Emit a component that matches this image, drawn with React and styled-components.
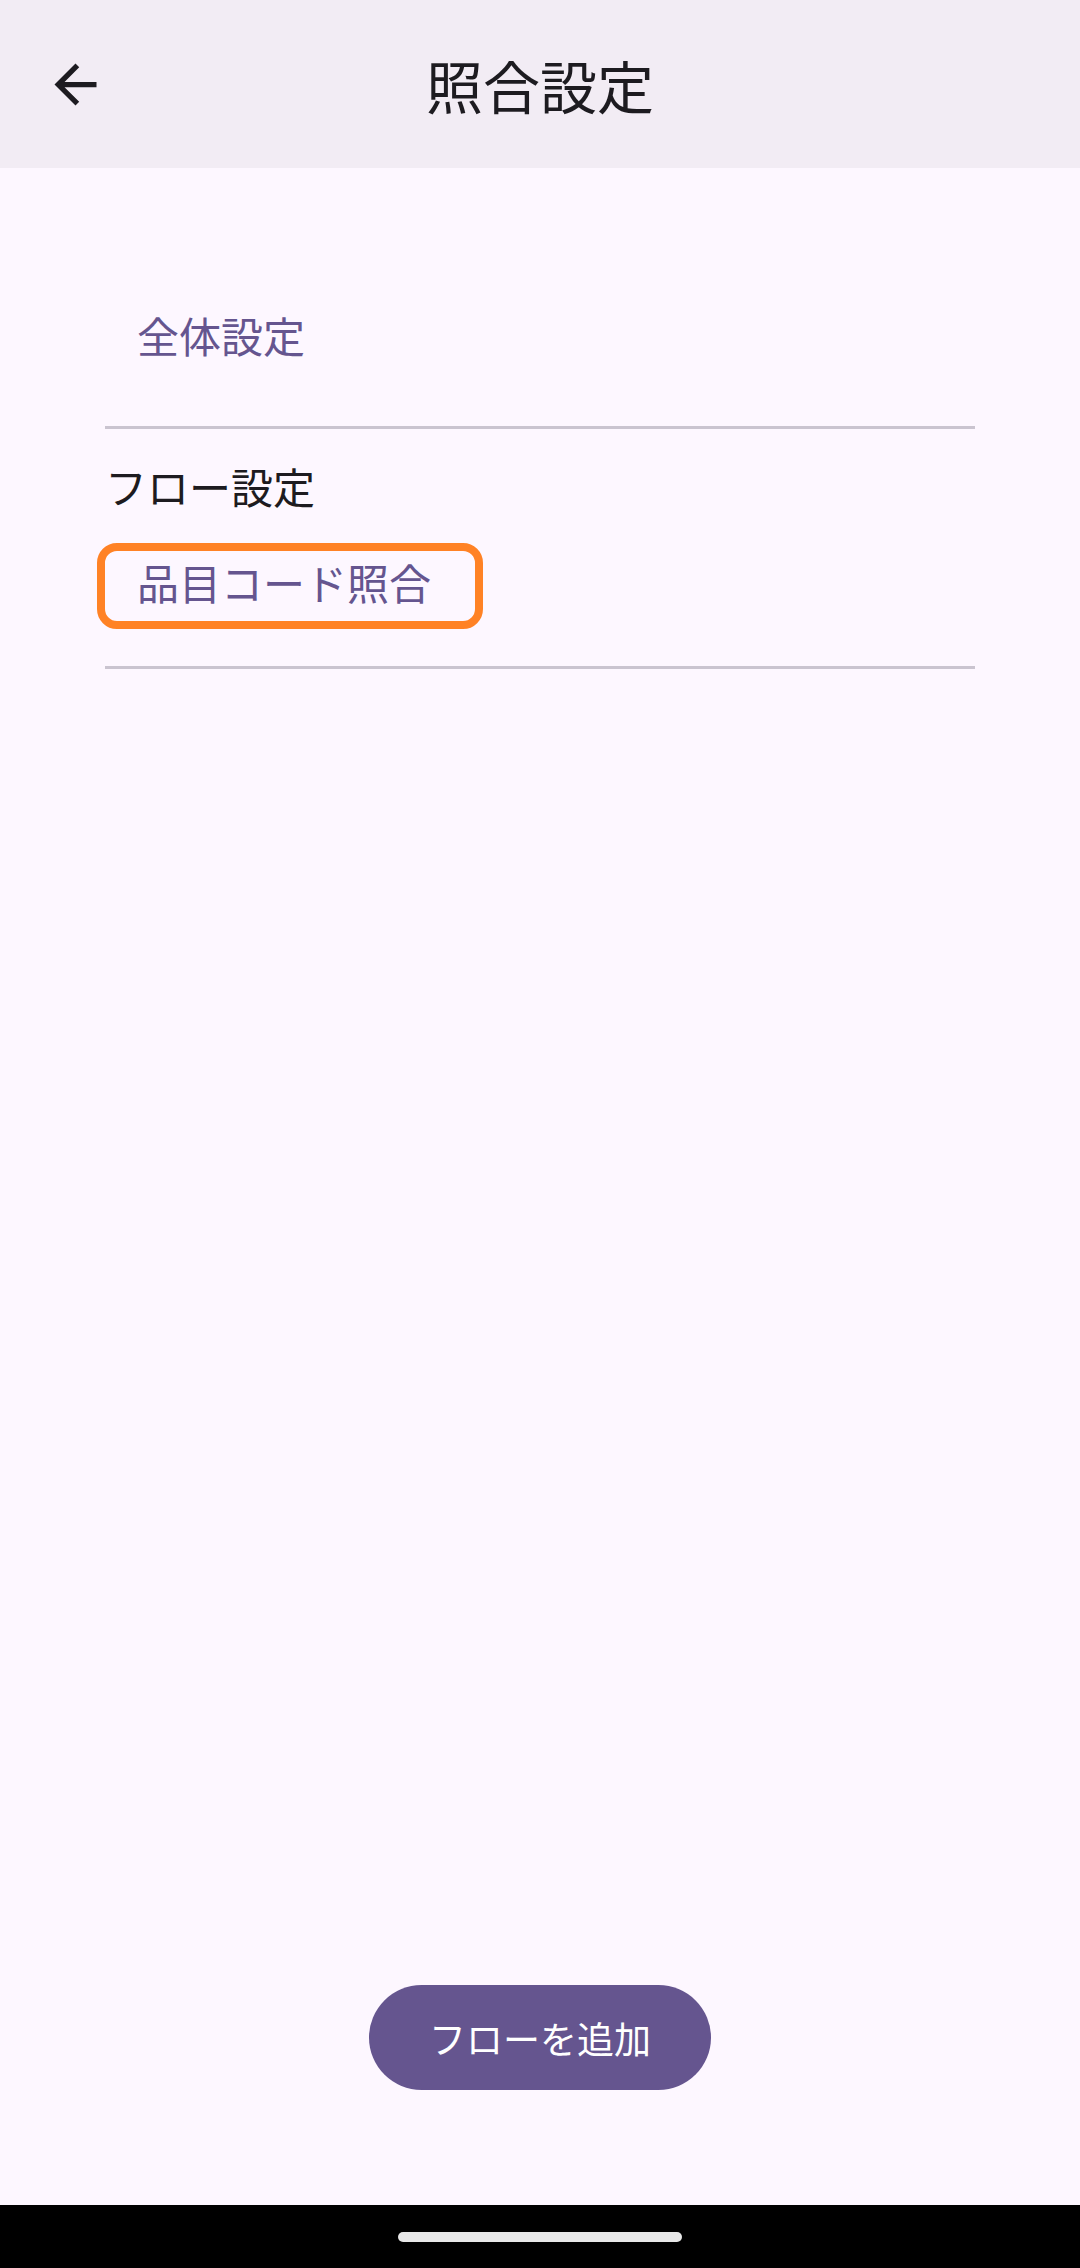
import React from "react";
import styled, { createGlobalStyle } from "styled-components";

const GlobalStyle = createGlobalStyle`
  html, body {
    margin: 0;
    padding: 0;
    background: #fdf7ff;
  }
  * {
    box-sizing: border-box;
  }
`;

const Screen = styled.div`
  width: 1080px;
  height: 2268px;
  display: flex;
  flex-direction: column;
  background: #fdf7ff;
  font-family: "Noto Sans CJK JP", "Noto Sans", sans-serif;
`;

const TopBar = styled.header`
  height: 168px;
  flex-shrink: 0;
  display: grid;
  grid-template-columns: 126px 1fr 126px;
  align-items: center;
  padding: 0 12px;
  background: #f2ecf4;
`;

const IconButton = styled.button`
  width: 126px;
  height: 126px;
  display: flex;
  align-items: center;
  justify-content: center;
  border: none;
  background: transparent;
  padding: 0;
  color: #1d1b20;
`;

const Title = styled.h1`
  margin: 0;
  text-align: center;
  font-size: 57px;
  font-weight: 400;
  line-height: 80px;
  color: #1d1b20;
`;

const Content = styled.main`
  flex: 1;
  display: flex;
  flex-direction: column;
  padding: 118px 105px 0;
`;

const LinkButton = styled.button`
  align-self: flex-start;
  display: flex;
  align-items: center;
  height: ${(p) => (p.$highlight ? "86px" : "105px")};
  width: ${(p) => (p.$highlight ? "386px" : "auto")};
  margin-left: ${(p) => (p.$highlight ? "-8px" : "0")};
  padding: 0 32px 8px;
  border: ${(p) => (p.$highlight ? "8px solid #ff8225" : "none")};
  border-radius: ${(p) => (p.$highlight ? "20px" : "52px")};
  background: transparent;
  font-family: inherit;
  font-size: 42px;
  line-height: 60px;
  color: #65558f;
`;

const Divider = styled.hr`
  margin: ${(p) => p.$top}px 0 0;
  border: none;
  height: 3px;
  background: #cac4d0;
`;

const SectionLabel = styled.div`
  margin: 27px 0 27px;
  font-size: 42px;
  line-height: 60px;
  color: #1d1b20;
`;

const Footer = styled.div`
  display: flex;
  justify-content: center;
  padding-bottom: 115px;
`;

const FilledButton = styled.button`
  width: 342px;
  height: 105px;
  border: none;
  border-radius: 53px;
  background: #65558f;
  color: #ffffff;
  font-family: inherit;
  font-size: 37px;
  line-height: 52px;
`;

const NavBar = styled.div`
  height: 63px;
  flex-shrink: 0;
  display: flex;
  justify-content: center;
  padding-top: 27px;
  background: #000000;
`;

const Handle = styled.div`
  width: 284px;
  height: 10px;
  border-radius: 5px;
  background: #e8e8e8;
`;

function BackArrow() {
  return (
    <svg width="63" height="63" viewBox="0 0 24 24" fill="currentColor">
      <path d="M20 11H7.83l5.59-5.59L12 4l-8 8 8 8 1.41-1.41L7.83 13H20v-2z" />
    </svg>
  );
}

export default function App() {
  return (
    <Screen>
      <GlobalStyle />
      <TopBar>
        <IconButton aria-label="戻る">
          <BackArrow />
        </IconButton>
        <Title>照合設定</Title>
        <div />
      </TopBar>
      <Content>
        <LinkButton>全体設定</LinkButton>
        <Divider $top={35} />
        <SectionLabel>フロー設定</SectionLabel>
        <LinkButton $highlight>品目コード照合</LinkButton>
        <Divider $top={37} />
      </Content>
      <Footer>
        <FilledButton>フローを追加</FilledButton>
      </Footer>
      <NavBar>
        <Handle />
      </NavBar>
    </Screen>
  );
}
